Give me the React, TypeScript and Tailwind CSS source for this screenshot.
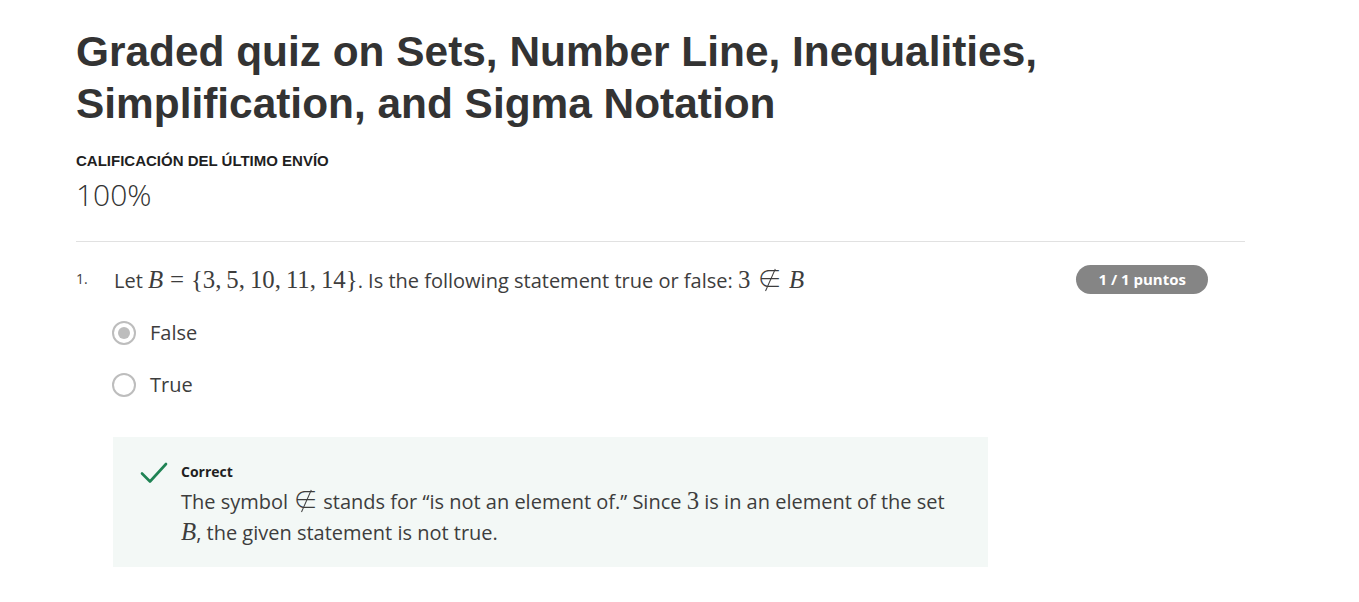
import React from 'react';

const serif = '"Liberation Serif", "DejaVu Serif", serif';

const M: React.FC<{ children: React.ReactNode; italic?: boolean }> = ({ children, italic }) => (
  <span className={`text-[1.24em] leading-none ${italic ? 'italic' : ''}`} style={{ fontFamily: serif }}>
    {children}
  </span>
);

// relation symbol with KaTeX style thick spaces around it
const Rel: React.FC<{ children: React.ReactNode }> = ({ children }) => (
  <span className="text-[1.24em] leading-none mx-[0.2777em]" style={{ fontFamily: serif }}>
    {children}
  </span>
);

// "not an element of": a light element sign with a slash laid over it
const NotIn = () => (
  <span className="relative inline-block" style={{ fontFamily: '"Noto Sans CJK JP", "Liberation Serif", serif' }}>
    <span className="font-light">∈</span>
    <span className="absolute left-1/2 top-[0.12em] w-px h-[0.95em] bg-current rotate-[24deg]" />
  </span>
);

const Radio: React.FC<{ checked?: boolean; label: string }> = ({ checked, label }) => (
  <div className="flex items-center h-[52px]">
    <span className="w-6 h-6 rounded-full border-2 border-[#bdbdbd] flex items-center justify-center">
      {checked && <span className="w-3 h-3 rounded-full bg-[#bdbdbd]" />}
    </span>
    <span className="ml-[14px] text-[20px] text-[#3d3d3d]">{label}</span>
  </div>
);

const CheckIcon = () => (
  <svg width="28" height="24" viewBox="0 0 28 24" fill="none">
    <path d="M2 12.5 L10 20.5 L26 3" stroke="#1f8354" strokeWidth="2.6" strokeLinecap="round" strokeLinejoin="round" />
  </svg>
);

export default function App() {
  return (
    <div
      className="min-h-screen bg-white pt-[26px] pl-[76px]"
      style={{ fontFamily: '"Open Sans", "Liberation Sans", sans-serif' }}
    >
      <div className="w-[1169px]">
        {/* TITLE */}
        <h1
          className="text-[42.4px] leading-[52px] font-bold text-[#333333]"
          style={{ fontFamily: '"Liberation Sans", Arial, sans-serif' }}
        >
          Graded quiz on Sets, Number Line, Inequalities, Simplification, and Sigma Notation
        </h1>

        <div
          className="mt-[23px] text-[15px] leading-4 font-bold uppercase text-[#1f1f1f]"
          style={{ fontFamily: '"Liberation Sans", Arial, sans-serif' }}
        >
          Calificación del último envío
        </div>
        <div className="mt-[8px] text-[30px] leading-9 font-light text-[#333333]">100%</div>

        <div className="mt-[28px] border-t border-[#e1e1e1]" />

        {/* QUESTION */}
        <div className="mt-[23px] flex items-start">
          <div className="flex-1 flex">
            <span className="w-[38px] text-[14px] leading-[28px] text-[#3d3d3d]">1.</span>
            <div className="flex-1">
              <p className="text-[20px] leading-[28px] text-[#3d3d3d]">
                Let <M italic>B</M><Rel>=</Rel><M>{'{3,\u20095,\u200910,\u200911,\u200914}'}</M>. Is the following statement true or false: <M>3</M><Rel><NotIn /></Rel><M italic>B</M>
              </p>

              <div className="mt-[12px] -ml-[2px]">
                <Radio checked label="False" />
                <Radio label="True" />
              </div>

              <div className="mt-[26px] -ml-[1px] w-[875px] bg-[#f3f8f6] pt-[25px] pb-[19px] pl-[27px] pr-[40px] flex">
                <div className="w-[41px] -mt-[1px]">
                  <CheckIcon />
                </div>
                <div className="flex-1">
                  <div className="text-[14px] leading-5 font-bold text-[#1f1f1f]">Correct</div>
                  <p className="mt-[4px] text-[20px] leading-[31px] text-[#3d3d3d]">
                    The symbol <M><NotIn /></M> stands for “is not an element of.” Since <M>3</M> is in an element of the set <M italic>B</M>, the given statement is not true.
                  </p>
                </div>
              </div>
            </div>
          </div>

          <div className="mr-[37px] h-[29px] px-[22px] rounded-full bg-[#858585] text-white text-[15px] font-bold flex items-center">
            1 / 1 puntos
          </div>
        </div>
      </div>
    </div>
  );
}
